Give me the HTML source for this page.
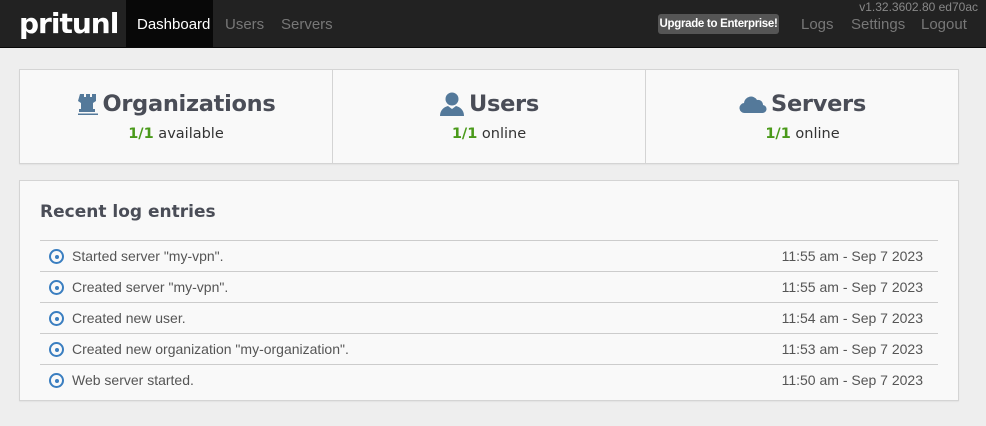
<!DOCTYPE html>
<html><head><meta charset="utf-8"><style>
*{box-sizing:border-box;margin:0;padding:0}
body{width:986px;height:426px;background:#eee;font-family:"Liberation Sans",Arial,sans-serif;overflow:hidden;position:relative}
.nav{position:absolute;left:0;top:0;width:986px;height:48px;background:#222;border-bottom:1px solid #080808}
.logo{position:absolute;left:19px;top:7px;font:bold 28px "DejaVu Sans",sans-serif;color:#fff;letter-spacing:-1px}
.nl{position:absolute;top:16px;font-size:15px;color:#777}
.act{position:absolute;left:126px;top:0;width:87px;height:48px;background:#080808}
.ver{position:absolute;right:8px;top:0;font-size:12px;color:#888}
.up{position:absolute;left:658px;top:14px;width:121px;height:20px;background:#555;border-radius:3px;color:#fff;font-weight:bold;font-size:11.5px;line-height:20px;text-align:center;letter-spacing:-0.3px}
.panel{position:absolute;left:19px;width:940px;background:#f9f9f9;border:1px solid #d4d4d4;box-shadow:0 1px 1px rgba(0,0,0,.05)}
.stat{position:absolute;top:0;height:94px;width:313px;text-align:center}
.stat h2{margin-top:20px;height:28px;line-height:28px;font:bold 22.5px/28px "DejaVu Sans",sans-serif;color:#4a4d57;letter-spacing:-0.3px;display:flex;justify-content:center;align-items:center}
.stat p{margin-top:8px;font:14.5px "DejaVu Sans",sans-serif;color:#333}
.stat b{color:#4a9a1a}
.ico{display:block;margin-right:4px}
h3{position:absolute;left:20px;top:21px;font:bold 17px "DejaVu Sans",sans-serif;color:#4a4d57}
.row{position:absolute;left:20px;width:898px;height:31px;border-top:1px solid #ccc;font-size:14px;color:#555;line-height:31px}
.row .t{position:absolute;left:32px}
.row .d{position:absolute;right:15px}
.row i{position:absolute;left:9px;top:8px;width:15px;height:15px;border:2px solid #3a7ec0;border-radius:50%}
.row i:after{content:"";position:absolute;left:3.5px;top:3.5px;width:4px;height:4px;background:#3a7ec0;border-radius:50%}
</style></head><body>
<div class="nav">
<div class="logo">pritunl</div>
<div class="act"></div>
<div class="nl" style="left:137px;color:#fff">Dashboard</div>
<div class="nl" style="left:225px">Users</div>
<div class="nl" style="left:281px">Servers</div>
<div class="ver">v1.32.3602.80 ed70ac</div>
<div class="up">Upgrade to Enterprise!</div>
<div class="nl" style="left:801px">Logs</div>
<div class="nl" style="left:851px">Settings</div>
<div class="nl" style="left:921px">Logout</div>
</div>
<div class="panel" style="top:69px;height:95px">
<div class="stat" style="left:0;border-right:1px solid #d4d4d4"><h2><svg class="ico" width="22" height="24" viewBox="0 0 22 24"><path fill="#54799a" d="M3 2h4v3h2V2h4v3h2V2h4v7l-3 2v6h2v3H2v-3h2v-6l-3-2z"/><rect x="1" y="21.5" width="20" height="1.5" fill="#54799a"/></svg>Organizations</h2><p><b>1/1</b> available</p></div>
<div class="stat" style="left:313px;border-right:1px solid #d4d4d4"><h2><svg class="ico" width="26" height="24" viewBox="0 0 26 24"><circle cx="13" cy="7" r="6.5" fill="#54799a"/><path fill="#54799a" d="M1 24c0-6 4-9 8-10l4 3 4-3c4 1 8 4 8 10z"/></svg>Users</h2><p><b>1/1</b> online</p></div>
<div class="stat" style="left:626px"><h2><svg class="ico" width="28" height="24" viewBox="0 0 28 24"><path fill="#54799a" d="M6 21a5 5 0 0 1-1-10 7 7 0 0 1 13-3 5 5 0 0 1 6 5 4 4 0 0 1-1 8z"/></svg>Servers</h2><p><b>1/1</b> online</p></div>
</div>
<div class="panel" style="top:180px;height:221px">
<h3>Recent log entries</h3>
<div class="row" style="top:59px"><i></i><span class="t">Started server "my-vpn".</span><span class="d">11:55 am - Sep 7 2023</span></div>
<div class="row" style="top:90px"><i></i><span class="t">Created server "my-vpn".</span><span class="d">11:55 am - Sep 7 2023</span></div>
<div class="row" style="top:121px"><i></i><span class="t">Created new user.</span><span class="d">11:54 am - Sep 7 2023</span></div>
<div class="row" style="top:152px"><i></i><span class="t">Created new organization "my-organization".</span><span class="d">11:53 am - Sep 7 2023</span></div>
<div class="row" style="top:183px"><i></i><span class="t">Web server started.</span><span class="d">11:50 am - Sep 7 2023</span></div>
</div>
</body></html>
